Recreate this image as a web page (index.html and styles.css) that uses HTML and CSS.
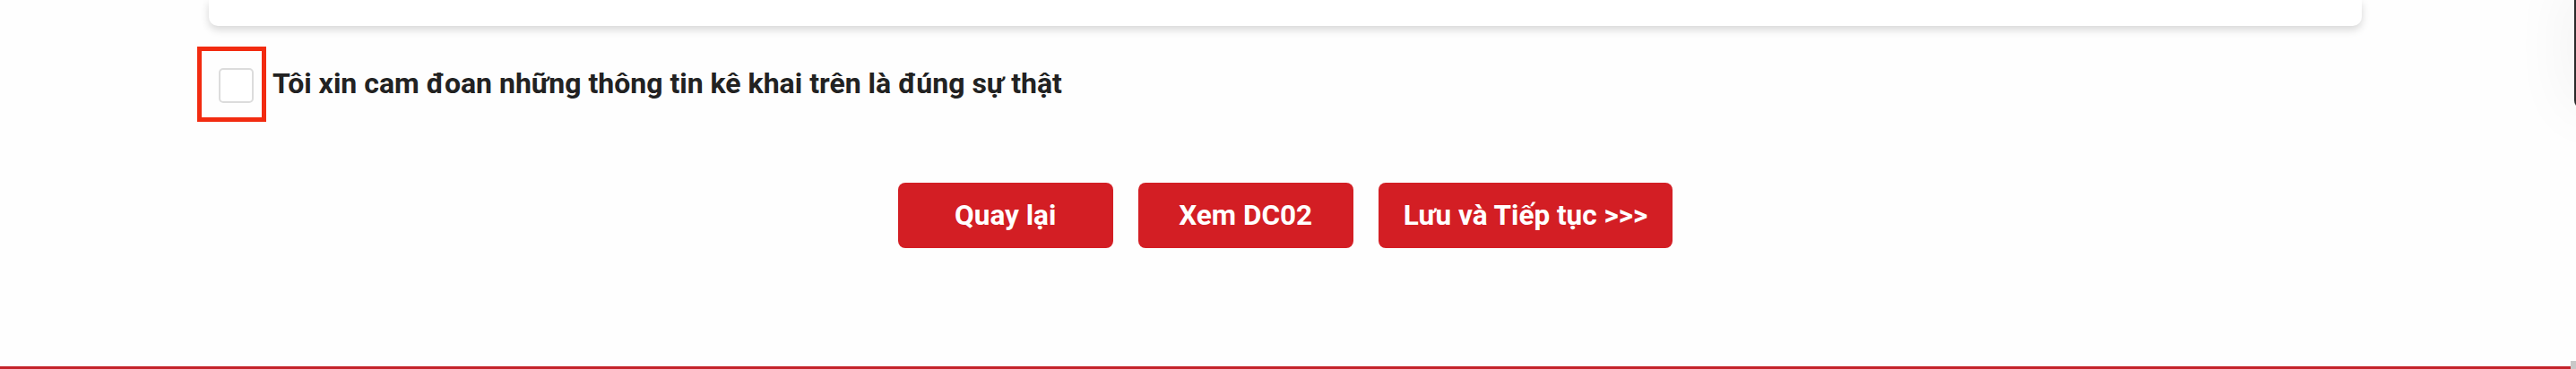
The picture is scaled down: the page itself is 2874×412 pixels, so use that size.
FILE: index.html
```html
<!DOCTYPE html>
<html lang="vi">
<head>
<meta charset="utf-8">
<title>Cam đoan</title>
<link rel="stylesheet" href="styles.css">
</head>
<body>
<div class="page">
  <main class="main">
    <div class="card"></div>
    <div class="agree">
      <span class="cb-frame"><span class="cb"></span></span>
      <span class="agree-text">Tôi xin cam đoan những thông tin kê khai trên là đúng sự thật</span>
    </div>
    <div class="actions">
      <button class="btn btn-fixed" type="button">Quay lại</button>
      <button class="btn btn-fixed" type="button">Xem DC02</button>
      <button class="btn" type="button">Lưu và Tiếp tục &gt;&gt;&gt;</button>
    </div>
    <footer class="footer-line"></footer>
  </main>
  <div class="scrollbar"><div class="thumb"></div></div>
  <div class="side-widget"></div>
</div>
</body>
</html>
```
FILE: styles.css
```css
html, body {
  margin: 0;
  padding: 0;
  background: #fefefe;
  overflow: hidden;
}
.page {
  position: relative;
  display: flex;
  height: 412px;
  font-family: Roboto, "Noto Sans", Arial, sans-serif;
}
.main {
  flex: 1;
  display: flex;
  flex-direction: column;
}
.card {
  height: 29px;
  margin: 0 233px;
  background: #fff;
  border-radius: 0 0 10px 10px;
  box-shadow: 0 4px 10px rgba(0, 0, 0, 0.16);
}
.agree {
  display: flex;
  align-items: center;
  margin: 23px 0 0 220px;
}
.cb-frame {
  box-sizing: border-box;
  width: 77px;
  height: 84px;
  border: 5px solid #f22b10;
  padding: 19px 0 0 19px;
}
.cb {
  display: block;
  box-sizing: border-box;
  width: 39px;
  height: 39px;
  border: 2px solid #dcdcdc;
  border-radius: 5px;
  background: #fff;
}
.agree-text {
  margin-left: 7px;
  margin-top: -2px;
  font-size: 32px;
  font-weight: 700;
  color: #222;
}
.actions {
  display: flex;
  justify-content: center;
  gap: 28px;
  margin-top: 68px;
}
.btn {
  height: 73px;
  padding: 0 28px;
  border: none;
  border-radius: 8px;
  background: #d31e24;
  color: #fff;
  font-family: Roboto, "Noto Sans", Arial, sans-serif;
  font-size: 31.5px;
  font-weight: 700;
}
.btn-fixed {
  width: 240px;
}
.footer-line {
  margin-top: auto;
  height: 3px;
  background: #c4232a;
}
.scrollbar {
  width: 6px;
  display: flex;
  flex-direction: column;
  justify-content: flex-end;
}
.thumb {
  height: 9px;
  background: #c8c8c8;
}
.side-widget {
  position: absolute;
  top: -20px;
  right: -40px;
  width: 42px;
  height: 142px;
  background: #2a2a2a;
  border-radius: 10px;
  box-shadow: 0 0 70px rgba(0, 0, 0, 0.07);
}
```
